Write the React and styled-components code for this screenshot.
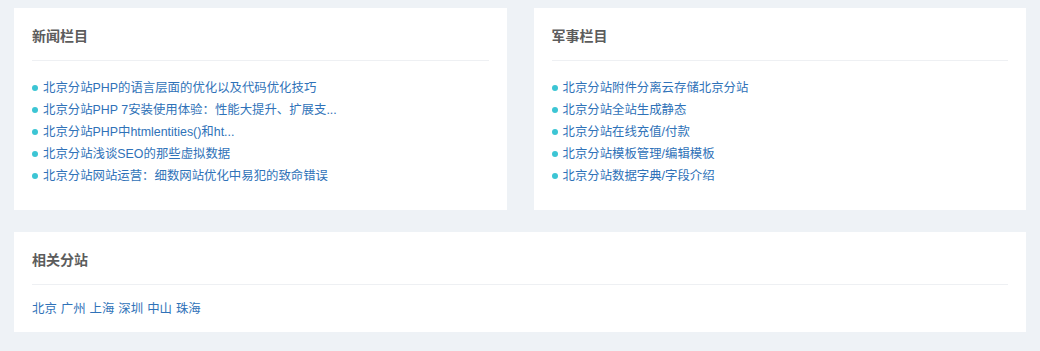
import styled, { createGlobalStyle } from 'styled-components'

const GlobalStyle = createGlobalStyle`
  html, body {
    margin: 0;
    padding: 0;
    background: #eef2f6;
  }
  body {
    font-family: "Liberation Sans", "Noto Sans CJK SC", sans-serif;
  }
`

const Page = styled.div`
  padding: 8px 14px 19px;
  display: grid;
  grid-template-columns: 1fr 1fr;
  column-gap: 27px;
  row-gap: 22px;
`

const Card = styled.section`
  background: #fff;
  padding: 0 18px;
  grid-column: ${p => (p.$wide ? '1 / -1' : 'auto')};
`

const CardHead = styled.h3`
  margin: 0;
  padding: 20px 0 16px;
  line-height: 16px;
  font-size: 14px;
  font-weight: 700;
  color: #5c5c5c;
  border-bottom: 1px solid #eef0f3;
`

const List = styled.ul`
  list-style: none;
  margin: 0;
  padding: 16px 0 23px;
`

const Item = styled.li`
  display: flex;
  align-items: center;
  line-height: 22px;
  font-size: 12.4px;

  &::before {
    content: '';
    width: 6px;
    height: 6px;
    border-radius: 50%;
    background: #3cc5d4;
    margin-right: 5px;
    flex-shrink: 0;
  }
`

const Link = styled.a`
  color: #2f72b8;
  text-decoration: none;
`

const Links = styled.div`
  padding: 13px 0 12px;
  line-height: 22px;
  font-size: 12.4px;
  display: flex;
  gap: 4px;
`

const news = [
  '北京分站PHP的语言层面的优化以及代码优化技巧',
  '北京分站PHP 7安装使用体验：性能大提升、扩展支...',
  '北京分站PHP中htmlentities()和ht...',
  '北京分站浅谈SEO的那些虚拟数据',
  '北京分站网站运营：细数网站优化中易犯的致命错误',
]

const military = [
  '北京分站附件分离云存储北京分站',
  '北京分站全站生成静态',
  '北京分站在线充值/付款',
  '北京分站模板管理/编辑模板',
  '北京分站数据字典/字段介绍',
]

const cities = ['北京', '广州', '上海', '深圳', '中山', '珠海']

const Column = ({ title, items }) => (
  <Card>
    <CardHead>{title}</CardHead>
    <List>
      {items.map(text => (
        <Item key={text}>
          <Link href="#">{text}</Link>
        </Item>
      ))}
    </List>
  </Card>
)

const App = () => (
  <>
    <GlobalStyle />
    <Page>
      <Column title="新闻栏目" items={news} />
      <Column title="军事栏目" items={military} />
      <Card $wide>
        <CardHead>相关分站</CardHead>
        <Links>
          {cities.map(c => (
            <Link key={c} href="#">
              {c}
            </Link>
          ))}
        </Links>
      </Card>
    </Page>
  </>
)

export default App
